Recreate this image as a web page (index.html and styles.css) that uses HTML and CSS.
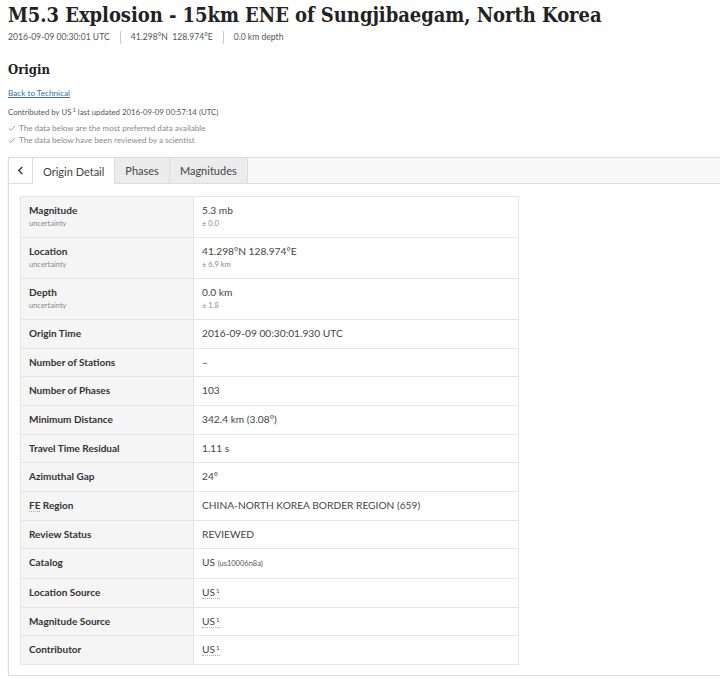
FILE: index.html
```html
<!DOCTYPE html>
<html>
<head>
<meta charset="utf-8">
<link rel="stylesheet" href="styles.css">
</head>
<body>
<header class="event-header">
  <h1 class="event-title">M5.3 Explosion - 15km ENE of Sungjibaegam, North Korea</h1>
  <div class="event-meta">
    <span class="meta-item">2016-09-09 00:30:01 UTC</span>
    <span class="meta-item">41.298°N&nbsp;&nbsp;128.974°E</span>
    <span class="meta-item">0.0 km depth</span>
  </div>
</header>

<section class="origin">
  <h2 class="section-title">Origin</h2>
  <a class="back-link" href="#">Back to Technical</a>
  <p class="contrib">Contributed by US<sup class="sup">1</sup> last updated 2016-09-09 00:57:14 (UTC)</p>
  <ul class="checks">
    <li class="check"><svg class="check-icon" viewBox="0 0 10 10" width="8" height="8"><path d="M1 5.5 L3.8 8 L9 2.2" fill="none" stroke="#8a9a8a" stroke-width="1.1"/></svg>The data below are the most preferred data available</li>
    <li class="check"><svg class="check-icon" viewBox="0 0 10 10" width="8" height="8"><path d="M1 5.5 L3.8 8 L9 2.2" fill="none" stroke="#8a9a8a" stroke-width="1.1"/></svg>The data below have been reviewed by a scientist</li>
  </ul>

  <div class="tabpanel">
    <nav class="tabbar">
      <button class="tab-back"><svg viewBox="0 0 8 10" width="7" height="9"><path d="M6 1 L2 5 L6 9" fill="none" stroke="#333" stroke-width="1.6"/></svg></button>
      <span class="tab tab-active">Origin Detail</span>
      <span class="tab">Phases</span>
      <span class="tab">Magnitudes</span>
    </nav>
    <div class="panel-body">
      <table class="detail">
        <tr class="two"><th>Magnitude<small class="sub">uncertainty</small></th><td>5.3 mb<small class="sub">± 0.0</small></td></tr>
        <tr class="two"><th>Location<small class="sub">uncertainty</small></th><td>41.298°N 128.974°E<small class="sub">± 6.9 km</small></td></tr>
        <tr class="two"><th>Depth<small class="sub">uncertainty</small></th><td>0.0 km<small class="sub">± 1.8</small></td></tr>
        <tr><th>Origin Time</th><td>2016-09-09 00:30:01.930 UTC</td></tr>
        <tr><th>Number of Stations</th><td>–</td></tr>
        <tr><th>Number of Phases</th><td>103</td></tr>
        <tr><th>Minimum Distance</th><td>342.4 km (3.08°)</td></tr>
        <tr><th>Travel Time Residual</th><td>1.11 s</td></tr>
        <tr><th>Azimuthal Gap</th><td>24°</td></tr>
        <tr><th><abbr class="abbr">FE</abbr> Region</th><td>CHINA-NORTH KOREA BORDER REGION (659)</td></tr>
        <tr><th>Review Status</th><td>REVIEWED</td></tr>
        <tr><th>Catalog</th><td>US <small class="cat-id">(us10006n8a)</small></td></tr>
        <tr><th>Location Source</th><td><abbr class="abbr">US<sup class="sup">1</sup></abbr></td></tr>
        <tr><th>Magnitude Source</th><td><abbr class="abbr">US<sup class="sup">1</sup></abbr></td></tr>
        <tr><th>Contributor</th><td><abbr class="abbr">US<sup class="sup">1</sup></abbr></td></tr>
      </table>
    </div>
  </div>
</section>
</body>
</html>
```

FILE: styles.css
```css
html, body {
  margin: 0;
  padding: 0;
  background: #fff;
}
body {
  padding: 0 0 0 8px;
  font-family: Lato, "Liberation Sans", sans-serif;
  color: #333;
  overflow: hidden;
  width: 712px;
}
.event-title {
  font-family: "DejaVu Serif Condensed", "DejaVu Serif", serif;
  font-stretch: condensed;
  font-weight: bold;
  font-size: 20px;
  line-height: 28px;
  letter-spacing: -0.05px;
  margin: 1px 0 0 0;
  color: #222;
  white-space: nowrap;
}
.event-meta {
  display: flex;
  align-items: center;
  font-size: 8.6px;
  line-height: 13px;
  color: #555;
  margin-top: 2px;
}
.meta-item {
  padding: 0 10px;
  border-left: 1px solid #ccc;
}
.meta-item:first-child {
  padding-left: 0;
  border-left: 0;
}
.origin {
  margin-top: 17px;
}
.section-title {
  font-family: "DejaVu Serif Condensed", "DejaVu Serif", serif;
  font-stretch: condensed;
  font-size: 13px;
  font-weight: bold;
  line-height: 18px;
  margin: 0;
  color: #222;
}
.back-link {
  display: inline-block;
  margin-top: 8px;
  font-size: 8.2px;
  line-height: 12px;
  color: #3a6ea5;
  text-decoration: underline;
}
.contrib {
  margin: 7px 0 0 0;
  font-size: 7.8px;
  line-height: 12px;
  color: #555;
}
.sup {
  font-size: 6px;
  vertical-align: top;
  position: relative;
  top: -2px;
  margin-left: 1px;
}
.checks {
  list-style: none;
  margin: 4px 0 0 0;
  padding: 0;
}
.check {
  font-size: 8.1px;
  line-height: 12px;
  color: #8a8a8a;
  display: flex;
  align-items: center;
}
.check-icon {
  margin-right: 3px;
}
.tabpanel {
  margin-top: 11px;
  border: 1px solid #ddd;
  border-right: 0;
  margin-right: -10px;
  box-shadow: 0 2px 2px #eee;
}
.tabbar {
  display: flex;
  height: 25px;
  background: #f8f8f8;
  border-bottom: 1px solid #ddd;
}
.tab-back {
  width: 24px;
  background: #fff;
  border: 0;
  border-right: 1px solid #ddd;
  padding: 0;
  display: flex;
  align-items: center;
  justify-content: center;
}
.tab {
  display: flex;
  align-items: center;
  padding: 0 10px;
  font-size: 11px;
  color: #444;
  background: #ececec;
  border-right: 1px solid #ddd;
}
.tab-active {
  background: #fff;
  margin-bottom: -1px;
}
.panel-body {
  padding: 12px 0 10px 11px;
}
.detail {
  width: 499px;
  border-collapse: collapse;
  border: 1px solid #e6e6e6;
}
.detail th, .detail td {
  border-top: 1px solid #e6e6e6;
  text-align: left;
  vertical-align: top;
  padding: 7px 8px 7.67px 8px;
  font-size: 10px;
  line-height: 13px;
}
.detail .two th, .detail .two td {
  padding-bottom: 7px;
}
.detail th {
  width: 156px;
  background: #f5f5f5;
  font-weight: bold;
  color: #333;
  border-right: 1px solid #e6e6e6;
}
.detail td {
  color: #444;
  font-size: 10.2px;
}
.sub {
  display: block;
  font-size: 7.5px;
  line-height: 12px;
  font-weight: normal;
  color: #888;
  margin-top: 1px;
}
.cat-id {
  font-size: 7.5px;
  color: #555;
}
.abbr {
  text-decoration: none;
  border-bottom: 1px dotted #aaa;
}
```
